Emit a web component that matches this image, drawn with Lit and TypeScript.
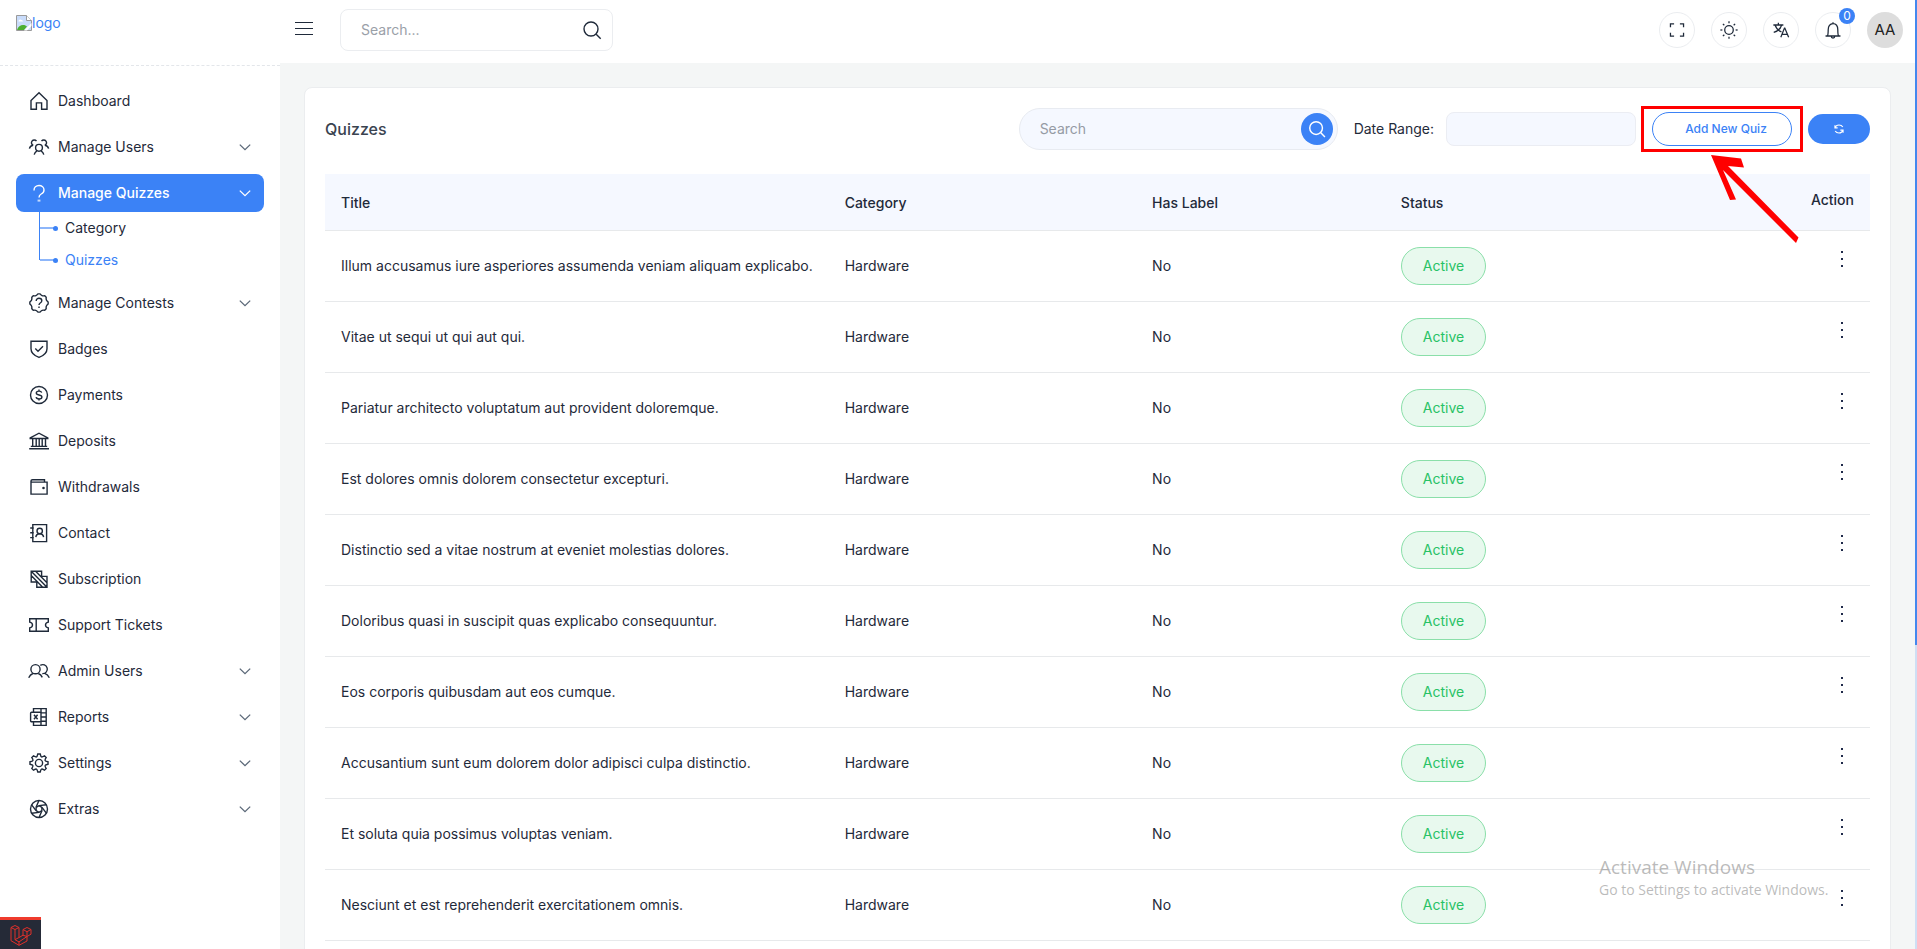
import { LitElement, html, css, svg, nothing } from "lit";
import { customElement, property, state } from "lit/decorators.js";
import { classMap } from "lit/directives/class-map.js";

/* Closed wavy outline with the given number of lobes, used by the badge and the gear. */
const wave = (lobes: number, outer: number, inner: number, flat: number) => {
  const step = (Math.PI * 2) / lobes;
  const at = (r: number, a: number) => `${(11 + r * Math.sin(a)).toFixed(2)} ${(11 - r * Math.cos(a)).toFixed(2)}`;
  let d = "";
  for (let i = 0; i < lobes; i++) {
    const a = i * step;
    d += `${i ? "L" : "M"}${at(outer, a - step * flat)}`;
    d += `L${at(outer, a + step * flat)}`;
    d += `Q${at(inner, a + step * 0.36)} ${at(inner, a + step * 0.5)}`;
    d += `Q${at(inner, a + step * 0.64)} ${at(outer, a + step * (1 - flat))}`;
  }
  return d + "Z";
};

const blades = [0, 60, 120, 180, 240, 300];

const icons: Record<string, unknown> = {
  home: svg`<path d="M11 2.8 3 10.6v8.700h5.400v-6.400h5.200v6.400H19v-8.700z"/>`,
  users: svg`<circle cx="11" cy="11.8" r="3.4"/><path d="M6.2 18.6c.4-1.700 1.300-2.700 2.700-3.700M15.800 18.600c-.4-1.700-1.300-2.700-2.700-3.700M5.300 9.400a2.800 2.800 0 1 1 3.200-4.300M16.700 9.400a2.800 2.800 0 1 0-3.200-4.300M1.400 12.600c.4-1.800 1.600-3 3.600-3.400M20.600 12.600c-.4-1.800-1.600-3-3.600-3.400"/>`,
  question: svg`<path d="M6 8.400c0-3 2.200-4.900 5-4.900s5 1.800 5 4.400c0 2.200-1.300 3.300-2.800 4.100-1.500.8-2.200 1.500-2.200 3.500"/><path d="M10.200 17.600v2M11.800 17.600v2" stroke-width="1"/>`,
  contest: svg`<path d="${wave(8, 9.2, 8, 0.14)}"/><path d="M8.200 8.900c0-1.600 1.200-2.600 2.800-2.600s2.800 1 2.800 2.400c0 1.200-.8 1.800-1.600 2.300-.8.500-1.200.9-1.200 2"/><path d="M11 14.600v1.500"/>`,
  badge: svg`<path d="M3 3.200h16v7.600c0 4.200-3.600 7-8 8.600-4.400-1.600-8-4.400-8-8.600z"/><path d="m7.300 10.500 2.700 2.700 5-5"/>`,
  payment: svg`<circle cx="11" cy="11" r="8.500"/><path d="M13.700 8.600c-.3-1-1.300-1.500-2.700-1.500-1.600 0-2.700.7-2.700 1.900 0 2.900 5.600 1.100 5.600 4 0 1.200-1.200 1.900-2.900 1.900-1.500 0-2.700-.6-2.900-1.700M11 5.600v1.500M11 14.900v1.600"/>`,
  bank: svg`<path d="M2.200 7.800 11 3.200l8.800 4.600v.7H2.200zM4.700 8.500v7.800M8.200 8.500v7.800M11.200 8.500v7.800M14.200 8.500v7.800M17.500 8.500v7.800M2.800 16.400h16.400M1.200 18.800h19.800"/>`,
  wallet: svg`<path d="M16.500 6V3.700H4.500C3.600 3.700 3 4.200 3 4.900S3.600 6.100 4.500 6.100h14.600v12H3V4.900"/><circle cx="15.500" cy="12" r=".6"/>`,
  contact: svg`<path d="M4.800 2.600h13.800v17H4.800zM2.200 6h3.600M2.200 10.800h3.600M2.200 15.600h3.600"/><circle cx="11.700" cy="9" r="2.700"/><path d="M7.800 15.200c.3-2.200 1.700-3.500 3.900-3.500s3.600 1.300 3.900 3.500"/>`,
  subscription: svg`<path d="M3.200 3.200h10.400v5.200H19v10.800H8.800V14H3.200zM3.200 3.200 19 19.200M7.600 3.200 19 14.700M3.200 7.600l11.500 11.600"/>`,
  ticket: svg`<path d="M1.700 4.800h18.600v3.300c-1.800.4-2.800 1.400-2.800 2.900s1 2.500 2.800 2.900v3.300H1.700v-3.300c1.800-.4 2.800-1.400 2.800-2.900s-1-2.500-2.800-2.900zM8.200 4.800v12.400"/>`,
  admins: svg`<circle cx="7.500" cy="9.200" r="4.600"/><path d="M.7 17.800c1-2.300 2.300-3.600 4.200-4.300M10.300 13.500c1.800.6 3.100 1.900 4 3.900M12.300 5.400a4.500 4.500 0 1 1 2 8.200M16.600 13.400c2.300.7 3.800 2.100 4.700 4.400"/>`,
  report: svg`<path d="M5.500 6.300V2.600h12.700v16.800H5.500v-3.600M13 2.600v3.700M13 15.700v3.700M13 6.900h5.200M13 11h5.200M13 15.200h5.200"/><rect x="2.600" y="6.300" width="10.400" height="9.500" rx="1"/><path d="m6 8.800 3.600 4.500M9.600 8.800 6 13.300"/>`,
  gear: svg`<path d="${wave(8, 9.1, 6.6, 0.17)}"/><circle cx="11" cy="11" r="3.600"/>`,
  aperture: svg`<circle cx="11" cy="11" r="8.500"/>${blades.map((a) => svg`<path transform="rotate(${a} 11 11)" d="M11 7.600 18.300 6.700M11 7.600 8.100 9.400"/>`)}`,
  menu: svg`<path d="M2 5.500h18M2 11.500h18M2 17.500h18"/>`,
  search: svg`<circle cx="10" cy="10" r="7"/><path d="m15.200 15.200 4.500 4.500"/>`,
  chevron: svg`<path d="m5.800 8.600 5.200 5 5.200-5"/>`,
  expand: svg`<path d="M3.800 8V4.300h4M14.200 4.300h4V8M3.800 14v3.700h4M14.200 17.700h4V14"/>`,
  sun: svg`<circle cx="11" cy="11" r="4.700"/>${[0, 45, 90, 135, 180, 225, 270, 315].map((a) => svg`<path transform="rotate(${a} 11 11)" d="M11 1.500v2.200"/>`)}`,
  translate: svg`<path d="M2.600 5.500h11M8.100 3v2.500M4.500 5.500c1.200 4 3.600 6.300 7 7.500M11.700 5.500c-1 4-3.700 6.600-8.700 8M10.800 18.900l4-10h.4l4.200 10M12.200 15.700h5.800"/>`,
  bell: svg`<path d="M2.800 17.600h16.400M4.800 17.500c.8-1 .9-2.600.9-6.600 0-3.800 1.900-6.900 5.300-6.900s5.300 3.100 5.300 6.900c0 4 .1 5.600.9 6.600M9.100 17.800c0 1.300.8 2 1.900 2s1.900-.7 1.900-2M11 2.600V4"/>`,
  refresh: svg`<path d="M3.500 4v5h5M3.800 8.700c1-3 3.800-5 7.200-5 3 0 5.500 1.300 7 3.800M18.500 18v-5h-5M18.200 13.300c-1 3-3.800 5-7.200 5-3 0-5.500-1.300-7-3.800"/>`,
};

@customElement("line-icon")
export class LineIcon extends LitElement {
  @property() name = "";
  static styles = css`
    :host { display: inline-flex; flex: none; width: 22px; height: 22px; }
    svg { width: 100%; height: 100%; fill: none; stroke: currentColor; stroke-width: var(--stroke, 1.4); overflow: visible; }
  `;
  render() {
    return html`<svg viewBox="0 0 22 22" aria-hidden="true">${icons[this.name] ?? nothing}</svg>`;
  }
}

interface NavItem { label: string; icon: string; menu?: boolean; children?: string[]; }

const NAV: NavItem[] = [
  { label: "Dashboard", icon: "home" },
  { label: "Manage Users", icon: "users", menu: true },
  { label: "Manage Quizzes", icon: "question", menu: true, children: ["Category", "Quizzes"] },
  { label: "Manage Contests", icon: "contest", menu: true },
  { label: "Badges", icon: "badge" },
  { label: "Payments", icon: "payment" },
  { label: "Deposits", icon: "bank" },
  { label: "Withdrawals", icon: "wallet" },
  { label: "Contact", icon: "contact" },
  { label: "Subscription", icon: "subscription" },
  { label: "Support Tickets", icon: "ticket" },
  { label: "Admin Users", icon: "admins", menu: true },
  { label: "Reports", icon: "report", menu: true },
  { label: "Settings", icon: "gear", menu: true },
  { label: "Extras", icon: "aperture", menu: true },
];

@customElement("side-nav")
export class SideNav extends LitElement {
  @state() private open = "Manage Quizzes";
  static styles = css`
    :host { display: block; background: #fff; color: #1f2a3a; }
    a { color: inherit; text-decoration: none; }
    .brand { display: flex; align-items: flex-start; height: 65px; padding: 12px 16px 0; box-sizing: border-box; color: #3b82f6; }
    .brand a { display: flex; align-items: center; font-size: 14px; line-height: 22px; }
    .broken { width: 16px; height: 16px; }
    .list { list-style: none; margin: 0; padding: 16px; border-top: 1px dashed #e3e6ea; display: flex; flex-direction: column; gap: 8px; }
    .item { display: flex; align-items: center; gap: 8px; width: 100%; height: 38px; padding: 0 8px 0 12px; box-sizing: border-box; border: 0; border-radius: 8px; background: none; font: inherit; color: inherit; text-align: left; cursor: pointer; }
    .label { flex: 1; }
    .chevron { color: #5b6878; --stroke: 1.3; }
    .active { background: #3b82f6; color: #fff; font-weight: 500; }
    .active .chevron { color: #fff; }
    .children { list-style: none; margin: 0; padding: 0 0 0 23px; }
    .child { display: flex; align-items: center; height: 32px; background: linear-gradient(#3b82f6, #3b82f6) 0 0 / 1px 100% no-repeat; }
    .child:last-child { background-size: 1px 50%; color: #3b82f6; }
    .child::before { content: ""; width: 14px; height: 2px; background: #8db6fa; margin-left: 1px; }
    .child::after { content: ""; order: 1; width: 5px; height: 5px; border-radius: 50%; background: #3b82f6; margin-left: -1px; }
    .child a { order: 2; padding-left: 7px; }
  `;
  render() {
    return html`
      <div class="brand">
        <a href="#">
          <svg class="broken" viewBox="0 0 16 16" aria-hidden="true">
            <path d="M.5.500h10l5 5v10H.500z" fill="#c9dcfb" stroke="#9a9a9a"/>
            <path d="M10.500.500v5h5" fill="#fff" stroke="#9a9a9a"/>
            <path d="M2.500 6.500a1.800 1.800 0 0 1 3-1.500 1.500 1.500 0 0 1 1.500 1.500z" fill="#fff"/>
            <path d="M1 15c1-3.500 3.500-5 6-5 2 0 3 .6 4 1.500L8 15z" fill="#4caf32"/>
            <path d="M8 15.500 15.500 8v3L11 15.500z" fill="#fff"/>
          </svg>logo
        </a>
      </div>
      <nav aria-label="Main">
        <ul class="list">
          ${NAV.map((n) => {
            const open = n.label === this.open;
            const body = html`<line-icon name=${n.icon}></line-icon><span class="label">${n.label}</span>`;
            return html`<li>
              ${n.menu
                ? html`<button class=${classMap({ item: true, active: !!n.children })} aria-expanded=${open}
                    @click=${() => (this.open = open ? "" : n.label)}>${body}<line-icon class="chevron" name="chevron"></line-icon></button>`
                : html`<a class="item" href="#">${body}</a>`}
              ${n.children && open
                ? html`<ul class="children">${n.children.map((c) => html`<li class="child"><a href="#">${c}</a></li>`)}</ul>`
                : nothing}
            </li>`;
          })}
        </ul>
      </nav>`;
  }
}

@customElement("top-bar")
export class TopBar extends LitElement {
  static styles = css`
    :host { display: flex; align-items: center; gap: 25px; height: 63px; padding: 0 12px 4px 13px; box-sizing: border-box; background: #fff; color: #1f2a3a; }
    button { padding: 0; border: 0; background: none; color: inherit; font: inherit; display: flex; align-items: center; justify-content: center; cursor: pointer; }
    .toggle { margin-bottom: 4px; --stroke: 1.2; }
    .search { display: flex; align-items: center; width: 273px; height: 42px; padding: 0 9px 0 20px; box-sizing: border-box; border: 1px solid #ebedf0; border-radius: 8px; }
    .search input { flex: 1; min-width: 0; border: 0; outline: 0; padding: 0; background: none; font: inherit; color: inherit; }
    .search input::placeholder { color: #9aa0a8; opacity: 1; }
    .tools { display: flex; gap: 16px; margin-left: auto; }
    .tool { position: relative; width: 36px; height: 36px; box-sizing: border-box; border: 1px solid #ebedf0; border-radius: 50%; }
    .tool line-icon { width: 20px; height: 20px; --stroke: 1.4; }
    .count { position: absolute; top: -5px; right: -5px; width: 16px; height: 16px; border-radius: 50%; background: #3b82f6; color: #fff; font-size: 12px; line-height: 16px; text-align: center; }
    .avatar { border: 0; background: #ddd; color: #222; font-size: 15px; }
  `;
  render() {
    return html`
      <button class="toggle" aria-label="Toggle menu"><line-icon name="menu"></line-icon></button>
      <form class="search" role="search" @submit=${(e: Event) => e.preventDefault()}>
        <input type="search" placeholder="Search..." aria-label="Search the site" />
        <button aria-label="Search"><line-icon name="search"></line-icon></button>
      </form>
      <div class="tools">
        <button class="tool" aria-label="Full screen"><line-icon name="expand"></line-icon></button>
        <button class="tool" aria-label="Theme"><line-icon name="sun"></line-icon></button>
        <button class="tool" aria-label="Language"><line-icon name="translate"></line-icon></button>
        <button class="tool" aria-label="Notifications"><line-icon name="bell"></line-icon><span class="count">0</span></button>
        <button class="tool avatar">AA</button>
      </div>`;
  }
}

const QUIZZES = [
  "Illum accusamus iure asperiores assumenda veniam aliquam explicabo.",
  "Vitae ut sequi ut qui aut qui.",
  "Pariatur architecto voluptatum aut provident doloremque.",
  "Est dolores omnis dolorem consectetur excepturi.",
  "Distinctio sed a vitae nostrum at eveniet molestias dolores.",
  "Doloribus quasi in suscipit quas explicabo consequuntur.",
  "Eos corporis quibusdam aut eos cumque.",
  "Accusantium sunt eum dolorem dolor adipisci culpa distinctio.",
  "Et soluta quia possimus voluptas veniam.",
  "Nesciunt et est reprehenderit exercitationem omnis.",
].map((title) => ({ title, category: "Hardware", hasLabel: "No", status: "Active" }));

@customElement("quiz-card")
export class QuizCard extends LitElement {
  static styles = css`
    :host { display: block; background: #fff; border: 1px solid #ebedef; border-radius: 8px; padding: 20px 20px 40px; color: #1f2a3a; }
    button { font: inherit; cursor: pointer; }
    .head { display: flex; align-items: center; gap: 16px; margin-bottom: 24px; }
    h1 { flex: 1; margin: 0; font-size: 16px; line-height: 24px; font-weight: 500; color: #3a4350; }
    .search { display: flex; align-items: center; width: 319px; height: 42px; padding: 0 4px 0 20px; box-sizing: border-box; border: 1px solid #e8ebf1; border-radius: 21px; background: #f5f8ff; }
    input { min-width: 0; border: 0; outline: 0; padding: 0; background: none; font: inherit; color: inherit; }
    .search input { flex: 1; }
    .search input::placeholder { color: #959ba5; opacity: 1; }
    .go { width: 32px; height: 32px; padding: 0; border: 0; border-radius: 50%; background: #3b82f6; color: #fff; display: flex; align-items: center; justify-content: center; }
    .go line-icon { width: 20px; height: 20px; --stroke: 1.6; }
    .range { display: flex; align-items: center; gap: 12px; }
    .range input { width: 190px; height: 34px; box-sizing: border-box; padding: 0 12px; border: 1px solid #ebedf3; border-radius: 8px; background: #f5f8ff; }
    .marked { position: relative; }
    .add { display: block; height: 34px; width: 140px; padding: 0 0 0 8px; border: 1px solid #3b82f6; border-radius: 17px; background: #fff; color: #3b82f6; font-size: 12px; font-weight: 500; }
    .frame { position: absolute; inset: -6px -11px; border: 3px solid #f00; pointer-events: none; }
    .arrow { position: absolute; left: 58px; top: 42px; width: 90px; height: 90px; z-index: 1; pointer-events: none; }
    .reload { height: 30px; width: 62px; border: 0; border-radius: 15px; background: #3b82f6; color: #fff; display: flex; align-items: center; justify-content: center; }
    .reload line-icon { width: 12px; height: 12px; --stroke: 2; }
    table { width: 100%; table-layout: fixed; border-collapse: collapse; }
    .c-title { width: 32.6%; }
    .c-category { width: 19.9%; }
    .c-label { width: 16.1%; }
    th, td { padding: 0 16px; text-align: left; border-bottom: 1px solid #e7e9eb; font-weight: 400; }
    th { height: 54px; padding-top: 2px; background: #f5f8ff; font-weight: 500; }
    td { height: 70px; white-space: nowrap; }
    th:last-child, td:last-child { text-align: right; }
    th:last-child { padding: 0 16px 4px; height: 52px; }
    td:last-child { padding: 0 20px 16px; height: 54px; }
    .status { display: inline-block; height: 38px; padding: 0 21px 0 21px; box-sizing: border-box; border: 1px solid #8adfa9; border-radius: 19px; background: #e8f9ee; color: #28c265; line-height: 36px; }
    .more { width: 16px; height: 22px; padding: 0; border: 0; background: none; vertical-align: middle; }
    .more svg { display: block; margin: auto; width: 2px; height: 16px; fill: #1f2a4a; }
  `;
  render() {
    return html`
      <div class="head">
        <h1>Quizzes</h1>
        <form class="search" role="search" @submit=${(e: Event) => e.preventDefault()}>
          <input type="search" placeholder="Search" aria-label="Search quizzes" />
          <button class="go" aria-label="Search"><line-icon name="search"></line-icon></button>
        </form>
        <div class="range"><label for="range">Date Range:</label><input id="range" type="text" /></div>
        <div class="marked">
          <button class="add">Add New Quiz</button>
          <span class="frame"></span>
          <svg class="arrow" viewBox="0 0 90 90" aria-hidden="true">
            <path fill="#f00" d="M1 1 31 4.500 34 13.500 18 12 88.500 83.500 86 89 13 16 26 45.500 20 46z"/>
          </svg>
        </div>
        <button class="reload" aria-label="Reload"><line-icon name="refresh"></line-icon></button>
      </div>
      <table>
        <colgroup><col class="c-title" /><col class="c-category" /><col class="c-label" /><col /><col /></colgroup>
        <thead><tr><th>Title</th><th>Category</th><th>Has Label</th><th>Status</th><th>Action</th></tr></thead>
        <tbody>
          ${QUIZZES.map((q) => html`<tr>
            <td>${q.title}</td><td>${q.category}</td><td>${q.hasLabel}</td>
            <td><span class="status">${q.status}</span></td>
            <td><button class="more" aria-label="Actions"><svg viewBox="0 0 2 16"><path d="M0 0h2v2H0zM0 7h2v2H0zM0 14h2v2H0z"/></svg></button></td>
          </tr>`)}
        </tbody>
      </table>`;
  }
}

@customElement("app-root")
export class AppRoot extends LitElement {
  static styles = css`
    :host { display: grid; grid-template-columns: 280px minmax(0, 1fr) 2px; grid-template-rows: 100vh; height: 100vh; overflow: hidden; background: #f4f6f6; font-family: Inter, sans-serif; font-size: 14px; line-height: 22px; }
    main { padding: 24px; }
    .scroll { background: linear-gradient(#4488ee 68%, #cfdff4 68%); }
    .debug { position: absolute; left: 0; bottom: 0; width: 41px; height: 32px; padding: 0; border: 0; border-top: 3px solid #ef3b2d; background: #252a37; display: flex; align-items: center; justify-content: center; box-sizing: border-box; }
    .debug svg { width: 22px; height: 22px; fill: none; stroke: #e0302a; stroke-width: 1; }
    .notice { position: absolute; right: 82px; bottom: 48px; width: 236px; white-space: nowrap; color: rgba(120, 120, 120, 0.5); font-family: "Open Sans", "Noto Sans", sans-serif; font-size: 14px; line-height: 22px; pointer-events: none; }
    .notice p { margin: 0; }
    .notice .lead { font-size: 19px; line-height: 24px; }
  `;
  render() {
    return html`
      <side-nav></side-nav>
      <div>
        <top-bar></top-bar>
        <main><quiz-card></quiz-card></main>
      </div>
      <div class="scroll"></div>
      <button class="debug" aria-label="Debug bar">
        <svg viewBox="0 0 22 22" aria-hidden="true">
          <path d="M1 3.500 5 1.500l4 2v10l4-2.300V5.500l4-2 4 2v4.700l-4 2.300v4.500L9 21.300l-8-4.600zM1 3.500l4 2 4-2M5 5.500v10.200l4-2.200M5 15.700l4 2.200 8-5.400M9 17.900v3.400M13 5.500l4 2.200 4-2.200M17 7.700v4.800M13 11.200l4 1.300"/>
        </svg>
      </button>
      <div class="notice">
        <p class="lead">Activate Windows</p>
        <p>Go to Settings to activate Windows.</p>
      </div>`;
  }
}
